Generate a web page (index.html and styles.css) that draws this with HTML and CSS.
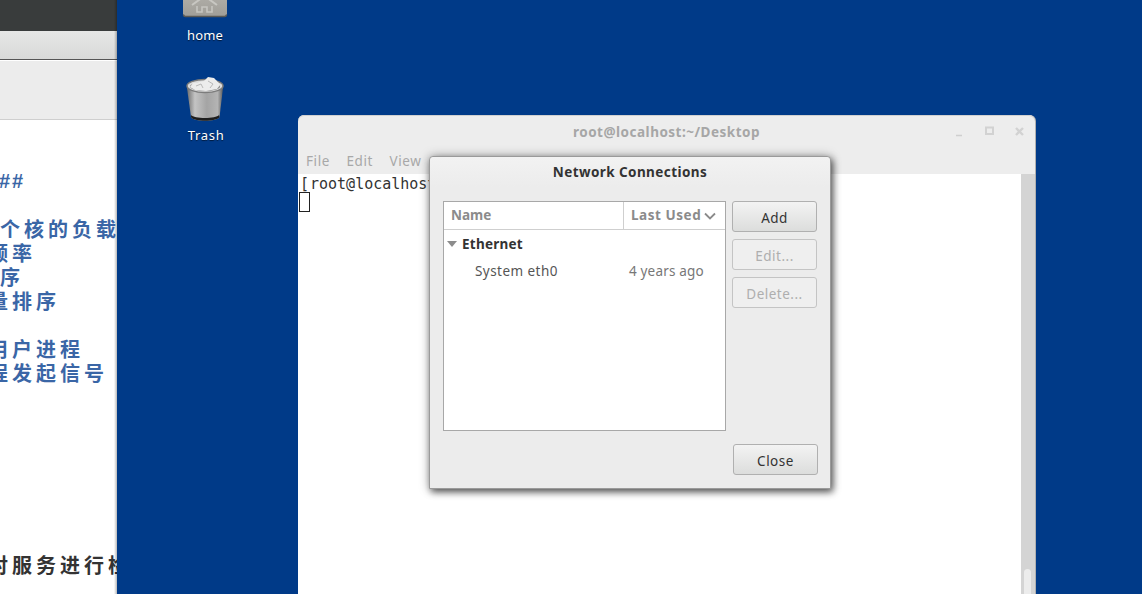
FILE: index.html
```html
<!DOCTYPE html>
<html lang="en">
<head>
<meta charset="utf-8">
<title>Network Connections</title>
<link rel="stylesheet" href="styles.css">
</head>
<body>
<main class="desktop">
  <section class="browser">
    <div class="browser-top"></div>
    <div class="browser-tabs"></div>
    <div class="browser-tools"></div>
    <article class="doc">
      <p class="doc-line"></p>
      <p class="doc-line"></p>
      <p class="doc-line hash">##</p>
      <p class="doc-line"></p>
      <p class="doc-line">个核的负载</p>
      <p class="doc-line cut">频率</p>
      <p class="doc-line">序</p>
      <p class="doc-line cut">量排序</p>
      <p class="doc-line"></p>
      <p class="doc-line cut">用户进程</p>
      <p class="doc-line cut">程发起信号</p>
      <p class="doc-line"></p>
      <p class="doc-line"></p>
      <p class="doc-line"></p>
      <p class="doc-line"></p>
      <p class="doc-line"></p>
      <p class="doc-line"></p>
      <p class="doc-line"></p>
      <p class="doc-line cut dark">对服务进行检查</p>
    </article>
  </section>

  <div class="desk-icon home-icon">
    <svg class="folder" width="46" height="22" viewBox="0 0 46 22">
      <defs>
        <linearGradient id="fold" x1="0" y1="0" x2="0" y2="1">
          <stop offset="0" stop-color="#b4b2ac"/>
          <stop offset="1" stop-color="#a09e98"/>
        </linearGradient>
      </defs>
      <rect x="1" y="-8" width="44" height="26" rx="2.5" fill="url(#fold)"/>
      <path d="M1.5 16.5a2 2 0 0 0 2 2h39a2 2 0 0 0 2-2" fill="none" stroke="#5a5955" stroke-width="1.4"/>
      <path d="M10 7 L22.500 -2 L35 7" fill="none" stroke="#c8c7c2" stroke-width="2"/>
      <path d="M15 8 V14 H20 V9 H25 V14 H30 V8" fill="none" stroke="#c6c5c0" stroke-width="1.600"/>
    </svg>
    <span class="desk-label">home</span>
  </div>

  <div class="desk-icon trash-icon">
    <svg width="42" height="48" viewBox="0 0 42 48">
      <defs>
        <linearGradient id="can" x1="0" y1="0" x2="1" y2="0">
          <stop offset="0" stop-color="#6e6e6e"/>
          <stop offset=".22" stop-color="#c4c4c4"/>
          <stop offset=".55" stop-color="#a4a4a4"/>
          <stop offset=".85" stop-color="#b4b4b4"/>
          <stop offset="1" stop-color="#5c5c5c"/>
        </linearGradient>
      </defs>
      <path d="M3 13 L7 42 C9 47 33 47 35.500 42 L39 13 Z" fill="url(#can)"/>
      <path d="M7 42 C9 47 33 47 35.500 42 L35 40 C32 44 10 44 7 40 Z" fill="#1e1e1e"/>
      <ellipse cx="21" cy="11" rx="18" ry="6.500" fill="#dcdcdc" stroke="#7c7c7c" stroke-width="1.500"/>
      <ellipse cx="21" cy="11.500" rx="15" ry="4.500" fill="#8a8a8a"/>
      <path d="M6 12 L9 8 L15 7 L20 6 L24 2 L30 3 L33 6 L36 10 L33 14 L22 16 L11 15 Z" fill="#ececec"/>
      <path d="M12 11 L17 9 L19 13 M24 6 L29 9 L26 13" fill="none" stroke="#b8b8b8" stroke-width="1"/>
    </svg>
    <span class="desk-label">Trash</span>
  </div>

  <section class="terminal">
    <header class="term-head">
      <div class="term-title-row">
        <h2 class="term-title">root@localhost:~/Desktop</h2>
        <svg class="term-controls" width="70" height="12" viewBox="0 0 70 12">
          <path d="M0 10.500H6" stroke="#cfcfcf" stroke-width="1.500"/>
          <rect x="30" y="2.500" width="7" height="6.500" fill="none" stroke="#d2d2d2" stroke-width="2"/>
          <path d="M60 3L67 10M67 3L60 10" stroke="#d2d2d2" stroke-width="2.400"/>
        </svg>
      </div>
      <nav class="term-menu"><span>File</span><span>Edit</span><span>View</span></nav>
    </header>
    <div class="term-main">
      <div class="term-text">
        <div class="prompt"><span class="bracket">[</span>root@localhost</div>
        <div class="cursor"></div>
      </div>
      <div class="scrollbar"><div class="thumb"></div></div>
    </div>
  </section>

  <section class="dialog">
    <h1 class="dialog-title">Network Connections</h1>
    <div class="dialog-body">
      <div class="conn-list">
        <div class="conn-head">
          <span class="col-name">Name</span>
          <span class="col-used">Last Used
            <svg width="12" height="8" viewBox="0 0 12 8"><path d="M1 1.500L6 6.500L11 1.500" fill="none" stroke="#8a8a8a" stroke-width="1.800"/></svg>
          </span>
        </div>
        <div class="conn-group"><span class="arrow"></span>Ethernet</div>
        <div class="conn-row"><span>System eth0</span><span class="conn-age">4 years ago</span></div>
      </div>
      <div class="side-buttons">
        <button class="btn">Add</button>
        <button class="btn off">Edit...</button>
        <button class="btn off">Delete...</button>
      </div>
    </div>
    <div class="dialog-foot"><button class="btn">Close</button></div>
  </section>
</main>
</body>
</html>
```
FILE: styles.css
```css
* { box-sizing: border-box; }
html, body { margin: 0; padding: 0; height: 100%; overflow: hidden; }
body { font-family: "Noto Sans", "Open Sans", sans-serif; font-size: 13px; }

.desktop { position: relative; width: 1142px; height: 594px; overflow: hidden; background: #003a88; }

/* background browser window */
.browser { position: absolute; left: 0; top: 0; width: 117px; height: 594px; overflow: hidden; display: flex; flex-direction: column; background: #fff; }
.browser::after { content: ""; position: absolute; right: 0; top: 0; bottom: 0; width: 3px; background: linear-gradient(90deg, rgba(0,0,0,0), rgba(0,0,0,.28)); }
.browser-top { height: 31px; flex: none; background: #393c3c; }
.browser-tabs { height: 29px; flex: none; background: linear-gradient(#e6e7e6, #d8d9d8); border-bottom: 1px solid #555; }
.browser-tools { height: 60px; flex: none; background: #ececec; border-top: 1px solid #fff; border-bottom: 1px solid #cfcfcf; }
.doc { flex: 1; margin-top: 1px; font-family: "Noto Sans CJK SC", "Liberation Sans", sans-serif; font-weight: 700; font-size: 20px; letter-spacing: 4px; line-height: 24px; color: #3a66a6; }
.doc-line { margin: 0; height: 24px; white-space: nowrap; }
.doc-line.hash { margin-left: -1px; letter-spacing: 2px; font-family: "Liberation Sans", sans-serif; }
.doc-line.cut { margin-left: -12px; }
.doc-line.dark { color: #333; }

/* desktop icons */
.desk-icon { position: absolute; display: flex; flex-direction: column; align-items: center; width: 80px; color: #fff; }
.home-icon { left: 165px; top: -2px; }
.trash-icon { left: 165px; top: 75px; }
.folder { display: block; margin-bottom: 6px; }
.desk-label { font-size: 13px; line-height: 18px; letter-spacing: .1px; text-shadow: 0 1px 1px rgba(0,0,0,.6); }
.trash-icon .desk-label { margin-top: 3px; margin-left: 2px; letter-spacing: .7px; }

/* terminal */
.terminal { position: absolute; left: 298px; top: 115px; width: 737px; height: 490px; display: flex; flex-direction: column; border-radius: 6px 6px 0 0; background: #ededed; box-shadow: inset 0 1px 0 #d0d0d0, 1px 0 0 #b0b0b0; overflow: hidden; }
.term-head { height: 59px; flex: none; display: flex; flex-direction: column; }
.term-title-row { height: 33px; flex: none; position: relative; display: flex; align-items: center; justify-content: center; }
.term-title { margin: 0; font-size: 13.500px; font-weight: 700; color: #a6a6a6; letter-spacing: .5px; }
.term-controls { position: absolute; right: 9px; top: 10px; }
.term-menu { display: flex; gap: 16.500px; padding-left: 8px; color: #a8a8a8; font-size: 13.500px; letter-spacing: .6px; line-height: 26px; }
.term-main { flex: 1; display: flex; min-height: 0; }
.term-text { flex: 1; background: #fff; padding: 0 0 0 1px; font-family: "DejaVu Sans Mono", monospace; font-size: 15px; line-height: 19px; color: #333; }
.prompt { padding-top: 1px; height: 18px; }
.bracket { display: inline-block; width: 11px; padding-left: 1px; }
.cursor { width: 11px; height: 20px; border: 1px solid #222; }
.scrollbar { width: 14px; flex: none; background: #d4d4d4; position: relative; }
.thumb { position: absolute; left: 3px; top: 395px; width: 7px; height: 120px; border-radius: 4px; background: #ececec; }

/* dialog */
.dialog { position: absolute; left: 429px; top: 156px; width: 402px; height: 333px; display: flex; flex-direction: column; border-radius: 4px 4px 0 0; background: #ececec; border: 1px solid #9a9a9a; box-shadow: 2px 3px 7px rgba(0,0,0,.6), 0 0 11px rgba(0,0,0,.28); }
.dialog-title { margin: 0; height: 30px; flex: none; text-align: center; font-size: 13.500px; line-height: 30px; font-weight: 700; letter-spacing: .42px; color: #333; background: linear-gradient(#f2f2f2, #ececec); border-radius: 4px 4px 0 0; }
.dialog-body { display: flex; gap: 6px; padding: 14px 13px 0 13px; flex: none; }
.conn-list { width: 283px; height: 230px; flex: none; background: #fff; border: 1px solid #a8a8a8; color: #555; }
.conn-head { height: 28px; display: flex; border-bottom: 1px solid #cfcfcf; color: #8b8b8b; font-weight: 700; font-size: 13.500px; line-height: 27px; }
.col-name { width: 180px; padding-left: 7px; border-right: 1px solid #cfcfcf; }
.col-used { flex: 1; padding-left: 7px; display: flex; align-items: center; gap: 3px; white-space: nowrap; letter-spacing: .55px; }
.conn-group { display: flex; align-items: center; height: 27px; padding-left: 3px; font-weight: 700; font-size: 13.500px; letter-spacing: .25px; color: #333; }
.arrow { width: 0; height: 0; margin-right: 5px; border-left: 5px solid transparent; border-right: 5px solid transparent; border-top: 6px solid #8c8c8c; }
.conn-row { display: flex; height: 28px; align-items: center; padding-left: 31px; font-size: 13.500px; letter-spacing: .45px; color: #555; }
.conn-age { margin-left: 71px; color: #777; letter-spacing: .2px; }
.side-buttons { display: flex; flex-direction: column; gap: 7px; }
.btn { width: 85px; height: 31px; padding: 2px 0 0; border: 1px solid #b0b0b0; border-radius: 3px; background: linear-gradient(#f3f3f3, #dcdddc); font-family: "Noto Sans", "Open Sans", sans-serif; font-size: 13.500px; letter-spacing: .5px; color: #333; }
.btn.off { background: #efefef; color: #aeaeae; border-color: #c4c4c4; }
.dialog-foot { display: flex; justify-content: flex-end; padding: 13px 12px 0 0; }
```
